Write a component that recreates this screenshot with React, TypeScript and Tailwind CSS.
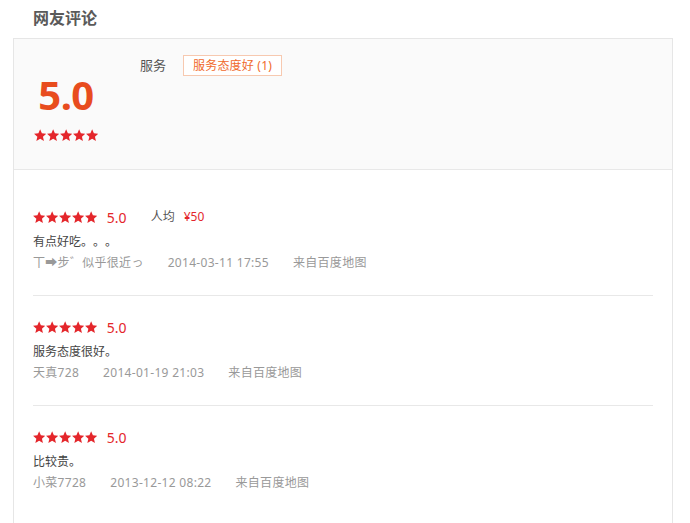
import React from "react";

const Star = ({ size = 12, color = "#e4262b" }: { size?: number; color?: string }) => (
  <svg width={size} height={size} viewBox="1 1.2 22 21.4" className="block">
    <path
      d="M12 1.5l3.1 7.2 7.8.7-5.9 5.2 1.8 7.7L12 18.2l-6.8 4.1 1.8-7.7L1.1 9.4l7.8-.7z"
      fill={color}
    />
  </svg>
);

const Stars = () => (
  <div className="flex gap-[0.6px]">
    {[0, 1, 2, 3, 4].map((i) => (
      <Star key={i} size={12.3} />
    ))}
  </div>
);

type Review = {
  text: string;
  user: string;
  time: string;
  avg?: string;
  last?: boolean;
};

const reviews: Review[] = [
  { text: "有点好吃。。。", user: "丅➡步゛似乎很近っ", time: "2014-03-11 17:55", avg: "¥50" },
  { text: "服务态度很好。", user: "天真728", time: "2014-01-19 21:03" },
  { text: "比较贵。", user: "小菜7728", time: "2013-12-12 08:22", last: true },
];

export default function App() {
  return (
    <div
      className="w-[690px] h-[523px] bg-white overflow-hidden [text-spacing-trim:space-all]"
      style={{ fontFamily: '"Noto Sans", "Noto Sans CJK SC", sans-serif' }}
    >
      <div className="pl-[33px] pt-[8px] h-[38px] text-[16px] leading-[20px] font-bold text-[#5a5a5a]">网友评论</div>
      <div className="ml-[13px] w-[660px] border border-[#e6e6e6] border-b-0 h-[485px]">
        <div className="h-[131px] bg-[#fafafa] border-b border-[#e8e8e8] flex">
          <div className="ml-[20px] w-[64px] flex flex-col items-center pt-[33px]">
            <div className="text-[40px] leading-[46px] font-bold text-[#e84c1e] tracking-[-0.5px]">5.0</div>
            <div className="mt-[11px]">
              <Stars />
            </div>
          </div>
          <div className="ml-[42px] pt-[16px] flex items-start">
            <div className="text-[13px] leading-[21px] text-[#555]">服务</div>
            <div className="ml-[17px] h-[21px] px-[9px] border border-[#f7c9b0] bg-white text-[12px] leading-[19px] text-[#f06a2c] tracking-[0.2px]">
              服务态度好 (1)
            </div>
          </div>
        </div>
        <div className="pt-[16px]">
          {reviews.map((r, i) => (
            <div
              key={i}
              className={
                "mx-[19px] pt-[21px] pb-[22px] " + (r.last ? "" : "border-b border-[#e8e8e8]")
              }
            >
              <div className="h-[20px] flex items-center">
                <Stars />
                <span className="ml-[10px] text-[14px] text-[#e4262b]">5.0</span>
                {r.avg && (
                  <>
                    <span className="ml-[24px] text-[12px] text-[#555]">人均</span>
                    <span className="ml-[9px] text-[12px] text-[#e4262b]">{r.avg}</span>
                  </>
                )}
              </div>
              <div className="mt-[5px] h-[20px] text-[12px] leading-[20px] text-[#444]">{r.text}</div>
              <div className="mt-[1px] h-[20px] text-[12px] leading-[20px] text-[#999] flex gap-[24px] tracking-[0.3px]">
                <span>{r.user}</span>
                <span>{r.time}</span>
                <span>来自百度地图</span>
              </div>
            </div>
          ))}
        </div>
      </div>
    </div>
  );
}
